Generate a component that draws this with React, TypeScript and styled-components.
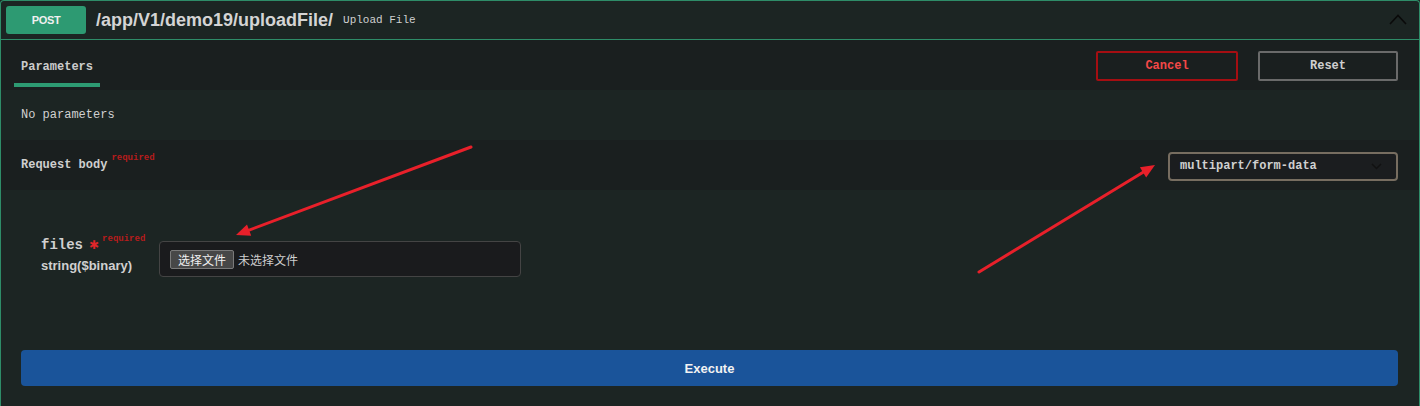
import React from "react";
import styled, { createGlobalStyle } from "styled-components";

const GlobalStyle = createGlobalStyle`
  html, body { margin: 0; padding: 0; background: #1c2523; }
  body { font-family: "Liberation Sans", Arial, sans-serif; }
  * { box-sizing: border-box; }
`;

const GREEN = "#2e8c68";
const BADGE = "#2d9a72";
const BG = "#1c2523";
const BG_DARK = "#1a1f1f";
const MONO = `"Liberation Mono", "DejaVu Sans Mono", monospace`;
const SANS = `"Liberation Sans", Arial, sans-serif`;
const CJK = `"Noto Sans CJK SC", "Liberation Sans", sans-serif`;

const Page = styled.div`
  position: relative;
  width: 1420px;
  height: 406px;
  overflow: hidden;
`;

const Opblock = styled.div`
  border: 1px solid ${GREEN};
  border-bottom: none;
  border-radius: 4px 4px 0 0;
  background: ${BG};
  min-height: 420px;
`;

const Summary = styled.div`
  height: 39px;
  display: flex;
  align-items: center;
  padding: 0 12px 0 5px;
  border-bottom: 1px solid ${GREEN};
`;

const Method = styled.span`
  width: 80px;
  height: 28px;
  border-radius: 3px;
  background: ${BADGE};
  color: #f0f0f0;
  font-family: ${SANS};
  font-weight: 700;
  font-size: 11px;
  letter-spacing: -0.3px;
  display: flex;
  align-items: center;
  justify-content: center;
  margin-top: -1px;
`;

const Path = styled.span`
  margin-left: 10px;
  font-family: ${SANS};
  font-weight: 700;
  font-size: 18px;
  color: #d4d4d4;
`;

const Desc = styled.span`
  margin-left: 10px;
  font-family: ${MONO};
  font-size: 11px;
  color: #cfcfcf;
`;

const Chevron = styled.svg`
  margin-left: auto;
  width: 18px;
  height: 11px;
  margin-top: -1px;
`;

const TabHeader = styled.div`
  height: 50px;
  background: ${BG_DARK};
  display: flex;
  align-items: center;
  padding: 0 21px 0 13px;
`;

const Tab = styled.div`
  align-self: stretch;
  display: flex;
  align-items: center;
  padding: 10px 7px 0 7px;
  border-bottom: 4px solid ${BADGE};
  margin-bottom: 3px;
  font-family: ${MONO};
  font-weight: 700;
  font-size: 12px;
  color: #cccccc;
`;

const Actions = styled.div`
  margin-left: auto;
  display: flex;
  gap: 20px;
  margin-top: 1px;
`;

const ActionButton = styled.button<{ $danger?: boolean }>`
  width: ${(p) => (p.$danger ? "142px" : "140px")};
  height: 30px;
  background: transparent;
  border: 2px solid ${(p) => (p.$danger ? "#a50e12" : "#6a6a6a")};
  border-radius: 2px;
  font-family: ${MONO};
  font-weight: 700;
  font-size: 12px;
  color: ${(p) => (p.$danger ? "#f44848" : "#cfcfcf")};
  padding: 0;
`;

const Section = styled.div<{ $dark?: boolean }>`
  height: 50px;
  display: flex;
  align-items: center;
  justify-content: space-between;
  padding: 0 21px 0 20px;
  background: ${(p) => (p.$dark ? BG_DARK : BG)};
`;

const PlainText = styled.span`
  font-family: ${MONO};
  font-size: 12px;
  color: #d0d0d0;
`;

const SectionTitle = styled.span`
  font-family: ${MONO};
  font-weight: 700;
  font-size: 12px;
  color: #cfcfcf;
  display: flex;
  align-items: flex-start;
`;

const Required = styled.sup`
  font-family: ${MONO};
  font-weight: 700;
  font-size: 9px;
  color: #b51c1c;
  vertical-align: top;
  margin-left: 4px;
  position: relative;
  top: -5px;
`;

const Select = styled.div`
  width: 230px;
  height: 29px;
  border: 2px solid #776d60;
  border-radius: 4px;
  background: #1b1d1f;
  display: flex;
  align-items: center;
  justify-content: space-between;
  padding: 0 14px 0 10px;
  margin-top: 2px;
  font-family: ${MONO};
  font-weight: 700;
  font-size: 12px;
  color: #d0d0d0;
`;

const Body = styled.div`
  padding: 47px 21px 0 20px;
`;

const ParamRow = styled.div`
  display: flex;
  align-items: flex-start;
  padding-left: 20px;
`;

const ParamName = styled.div`
  width: 118px;
  display: flex;
  flex-direction: column;
`;

const NameLine = styled.div`
  display: flex;
  align-items: flex-start;
  font-family: ${MONO};
  font-weight: 700;
  font-size: 14px;
  color: #d0d0d0;
`;

const Star = styled.span`
  color: #e0262a;
  font-family: "DejaVu Sans", sans-serif;
  font-weight: 700;
  font-size: 12px;
  margin-left: 6px;
  line-height: 14px;
  margin-top: 1px;
`;

const SmallRequired = styled.span`
  font-family: ${MONO};
  font-weight: 700;
  font-size: 9px;
  color: #b51c1c;
  margin-left: 3px;
  margin-top: -3px;
`;

const TypeLine = styled.div`
  margin-top: 5px;
  font-family: ${SANS};
  font-weight: 700;
  font-size: 13px;
  color: #d0d0d0;
`;

const FileBox = styled.div`
  margin-top: 4px;
  width: 362px;
  height: 36px;
  border: 1px solid #444;
  border-radius: 4px;
  background: #1a1b1d;
  display: flex;
  align-items: center;
  padding: 0 10px;
  gap: 4px;
`;

const FileButton = styled.span`
  height: 19px;
  padding: 0 7px;
  border: 1px solid #7a7a7a;
  border-radius: 2px;
  background: #474747;
  color: #f0f0f0;
  font-family: ${CJK};
  font-size: 12px;
  display: flex;
  align-items: center;
`;

const FileStatus = styled.span`
  font-family: ${CJK};
  font-size: 12px;
  color: #cfcfcf;
`;

const Execute = styled.button`
  margin-top: 73px;
  width: 100%;
  height: 36px;
  border: none;
  border-radius: 4px;
  background: #1a549a;
  color: #f2f2f2;
  font-family: ${SANS};
  font-weight: 700;
  font-size: 13px;
`;

const Overlay = styled.svg`
  position: absolute;
  left: 0;
  top: 0;
  pointer-events: none;
`;

function Arrow({ x1, y1, x2, y2 }: { x1: number; y1: number; x2: number; y2: number }) {
  const dx = x2 - x1;
  const dy = y2 - y1;
  const len = Math.hypot(dx, dy);
  const ux = dx / len;
  const uy = dy / len;
  const headLen = 14;
  const headW = 6;
  const bx = x2 - ux * headLen;
  const by = y2 - uy * headLen;
  const px = -uy;
  const py = ux;
  const pts = `${x2},${y2} ${bx + px * headW},${by + py * headW} ${bx - px * headW},${by - py * headW}`;
  return (
    <g>
      <line x1={x1} y1={y1} x2={bx + ux * 2} y2={by + uy * 2} stroke="#e8202a" strokeWidth={3} strokeLinecap="round" />
      <polygon points={pts} fill="#e8202a" />
    </g>
  );
}

export default function App() {
  return (
    <>
      <GlobalStyle />
      <Page>
        <Opblock>
          <Summary>
            <Method>POST</Method>
            <Path>/app/V1/demo19/uploadFile/</Path>
            <Desc>Upload File</Desc>
            <Chevron viewBox="0 0 18 11">
              <polyline points="1,10 9,1.5 17,10" fill="none" stroke="#0a0a0a" strokeWidth="1.6" />
            </Chevron>
          </Summary>
          <TabHeader>
            <Tab>Parameters</Tab>
            <Actions>
              <ActionButton $danger>Cancel</ActionButton>
              <ActionButton>Reset</ActionButton>
            </Actions>
          </TabHeader>
          <Section>
            <PlainText>No parameters</PlainText>
          </Section>
          <Section $dark>
            <SectionTitle>
              Request body<Required>required</Required>
            </SectionTitle>
            <Select>
              <span>multipart/form-data</span>
              <svg width="11" height="7" viewBox="0 0 11 7">
                <polyline points="1,1 5.5,5.5 10,1" fill="none" stroke="#111" strokeWidth="1.5" />
              </svg>
            </Select>
          </Section>
          <Body>
            <ParamRow>
              <ParamName>
                <NameLine>
                  files<Star>✱</Star>
                  <SmallRequired>required</SmallRequired>
                </NameLine>
                <TypeLine>string($binary)</TypeLine>
              </ParamName>
              <FileBox>
                <FileButton>选择文件</FileButton>
                <FileStatus>未选择文件</FileStatus>
              </FileBox>
            </ParamRow>
            <Execute>Execute</Execute>
          </Body>
        </Opblock>
        <Overlay width="1420" height="406" viewBox="0 0 1420 406">
          <Arrow x1={471} y1={147} x2={236} y2={235} />
          <Arrow x1={979} y1={272} x2={1155} y2={165} />
        </Overlay>
      </Page>
    </>
  );
}
